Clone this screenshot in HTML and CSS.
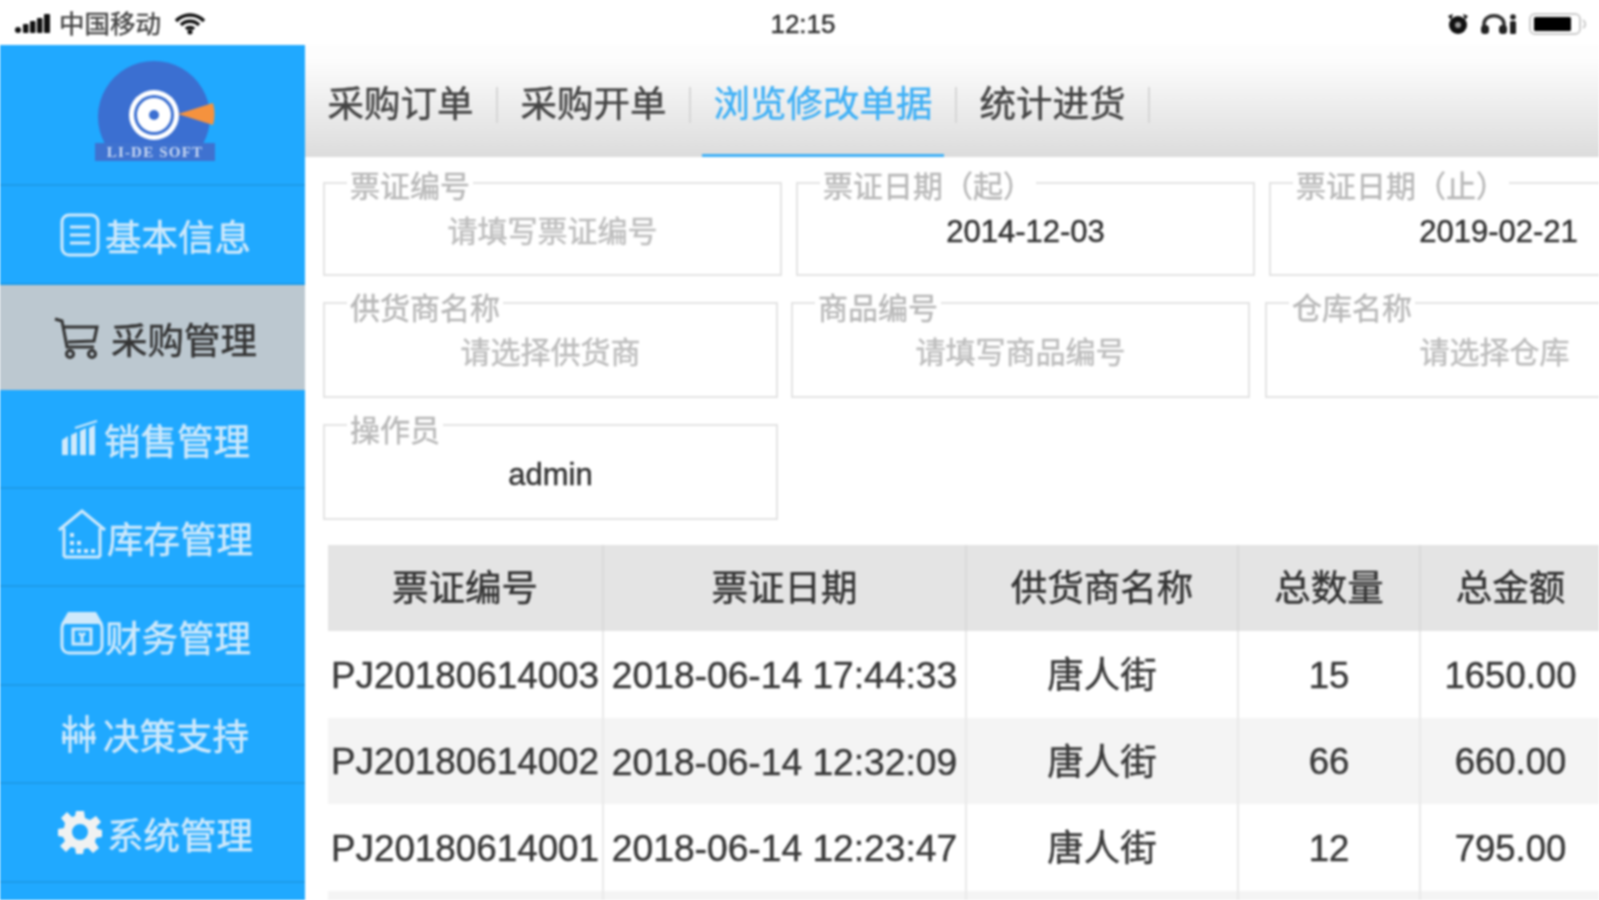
FILE: index.html
```html
<!DOCTYPE html>
<html lang="zh">
<head>
<meta charset="utf-8">
<title>浏览修改单据</title>
<link rel="stylesheet" href="styles.css">
</head>
<body>
<div class="app">
  <header class="status">
    <div class="status-left">
      <svg class="ic-signal" viewBox="0 0 36 20"><circle cx="3" cy="16" r="3"/><rect x="8" y="10" width="5.500" height="9" rx="1"/><rect x="15" y="7" width="5.500" height="12" rx="1"/><rect x="22" y="4" width="5.500" height="15" rx="1"/><rect x="29" y="0" width="6" height="19" rx="1"/></svg>
      <span class="carrier">中国移动</span>
      <svg class="ic-wifi" viewBox="0 0 32 22"><path d="M2 8 C10 0 22 0 30 8" /><path d="M7 12 C12 7 20 7 25 12"/><path d="M12 16 C14 14 18 14 20 16"/><circle cx="16" cy="19" r="2.500" class="fill"/></svg>
    </div>
    <div class="time">12:15</div>
    <div class="status-right">
      <svg class="ic-alarm" viewBox="0 0 22 22"><circle cx="11" cy="12" r="9"/><path d="M1 3 L6 1 L4 7Z M21 3 L16 1 L18 7Z"/><circle cx="11" cy="12" r="3" fill="#999"/></svg>
      <svg class="ic-head" viewBox="0 0 38 22"><path class="line" d="M4 16 V11 C4 0 24 0 24 11 V16"/><rect x="1" y="12" width="8" height="9" rx="3.500"/><rect x="19" y="12" width="8" height="9" rx="3.500"/><circle cx="33" cy="4" r="2.800"/><rect x="30" y="8" width="6" height="13" rx="1.500"/></svg>
      <svg class="ic-batt" viewBox="0 0 58 24"><rect class="shell" x="1" y="2" width="50" height="20" rx="5"/><rect x="5" y="5" width="37" height="14" rx="1.500"/><path class="shell" d="M54 8 C57 10 57 14 54 16"/></svg>
    </div>
  </header>

  <div class="body">
    <nav class="side">
      <div class="logo">
        <svg class="logo-mark" viewBox="0 0 124 106">
          <path d="M12 87 A56 56 0 1 1 110 87 Z" fill="#3b6fd1"/>
          <rect x="2" y="86" width="120" height="18" fill="#3f72d0"/>
          <circle cx="61" cy="58" r="25" fill="#fff"/>
          <circle cx="61" cy="58" r="20" fill="#3b6fd1"/>
          <circle cx="61" cy="58" r="17" fill="#fff"/>
          <circle cx="61" cy="58" r="5" fill="#3b6fd1"/>
          <path d="M85 57 L120 46 Q123 57 120 68 Z" fill="#f5923e"/>
          <text x="62" y="100" text-anchor="middle" class="logo-text">LI-DE SOFT</text>
        </svg>
      </div>
      <a class="item first">
        <svg class="ic ic-doc" viewBox="0 0 40 44"><rect x="2" y="2" width="36" height="40" rx="7"/><path d="M10 14H30M10 22H30M10 30H30"/></svg>
        <span>基本信息</span>
      </a>
      <a class="item active">
        <svg class="ic ic-cart" viewBox="0 0 46 44"><path d="M1 3 L8 5 L13 31 H40 M10 11 H43 L40 25 L14 26"/><circle cx="16" cy="38" r="3.500"/><circle cx="38" cy="38" r="3.500"/></svg>
        <span>采购管理</span>
      </a>
      <a class="item">
        <svg class="ic ic-bars" viewBox="0 0 38 36"><path class="fill" d="M1 20 L7 16 V35 H1Z M10 15 L16 12 V35 H10Z M19 11 L25 8 V35 H19Z M28 8 L34 5 V35 H28Z"/><path d="M14 8 L36 1"/></svg>
        <span>销售管理</span>
      </a>
      <a class="item store">
        <svg class="ic ic-house" viewBox="0 0 48 50"><path d="M1 21 L24 2 L47 21 M6 19 V48 M42 19 V48 M6 48 H42"/><path class="dots" d="M14 24V28 M14 32V36 M14 40V44 M21 32V36 M21 40V44 M28 40V44 M35 40V44"/></svg>
        <span>库存管理</span>
      </a>
      <a class="item store">
        <svg class="ic ic-shop" viewBox="0 0 44 44"><path class="fill" d="M8 1 H36 L43 13 H1Z"/><rect x="2" y="10" width="40" height="32" rx="7"/><rect x="13" y="18" width="18" height="15"/><path d="M19 22 L22 25 L25 22 M22 25 V31"/></svg>
        <span>财务管理</span>
      </a>
      <a class="item">
        <svg class="ic ic-tree" viewBox="0 0 36 40"><path d="M9 1 V39 M26 1 V39 M2 10 L9 15 L16 10 M19 10 L26 15 L33 10 M1 24 H16 M20 24 H35 M3 17 V30 M15 17 V30 M20 17 V30 M32 17 V30"/></svg>
        <span>决策支持</span>
      </a>
      <a class="item">
        <svg class="ic ic-gear" viewBox="0 0 44 44"><path class="gear" fill-rule="evenodd" d="M18 1 H26 L27 8 L32 10 L38 6 L43 12 L38 17 L40 19 L44 20 V27 L38 28 L37 32 L41 38 L35 43 L30 38 L26 39 L25 44 H18 L17 38 L13 37 L8 42 L2 36 L7 31 L5 27 L0 26 V19 L6 18 L7 13 L3 8 L9 2 L14 7 L17 6 Z M22 14 A8 8 0 1 0 22.010 30 A8 8 0 1 0 22 14 Z"/></svg>
        <span>系统管理</span>
      </a>
    </nav>

    <main class="main">
      <div class="tabs">
        <div class="tab"><span class="tab-label">采购订单</span></div>
        <div class="tab"><span class="tab-label">采购开单</span></div>
        <div class="tab on"><span class="tab-label">浏览修改单据</span></div>
        <div class="tab"><span class="tab-label">统计进货</span></div>
      </div>

      <section class="filters">
        <div class="row row-a">
          <fieldset class="field"><legend>票证编号</legend><div class="val ph">请填写票证编号</div></fieldset>
          <fieldset class="field"><legend>票证日期（起）</legend><div class="val">2014-12-03</div></fieldset>
          <fieldset class="field"><legend>票证日期（止）</legend><div class="val">2019-02-21</div></fieldset>
        </div>
        <div class="row row-b">
          <fieldset class="field"><legend>供货商名称</legend><div class="val ph">请选择供货商</div></fieldset>
          <fieldset class="field"><legend>商品编号</legend><div class="val ph">请填写商品编号</div></fieldset>
          <fieldset class="field"><legend>仓库名称</legend><div class="val ph">请选择仓库</div></fieldset>
        </div>
        <div class="row row-b">
          <fieldset class="field"><legend>操作员</legend><div class="val">admin</div></fieldset>
        </div>
      </section>

      <table class="grid">
        <colgroup><col class="c1"><col class="c2"><col class="c3"><col class="c4"><col class="c5"></colgroup>
        <thead>
          <tr><th>票证编号</th><th>票证日期</th><th>供货商名称</th><th>总数量</th><th>总金额</th></tr>
        </thead>
        <tbody>
          <tr><td>PJ20180614003</td><td>2018-06-14 17:44:33</td><td class="name">唐人街</td><td>15</td><td>1650.00</td></tr>
          <tr><td>PJ20180614002</td><td>2018-06-14 12:32:09</td><td class="name">唐人街</td><td>66</td><td>660.00</td></tr>
          <tr><td>PJ20180614001</td><td>2018-06-14 12:23:47</td><td class="name">唐人街</td><td>12</td><td>795.00</td></tr>
          <tr><td></td><td></td><td></td><td></td><td></td></tr>
        </tbody>
      </table>
    </main>
  </div>
</div>
</body>
</html>
```

FILE: styles.css
```css
* { box-sizing: border-box; }
html, body { margin: 0; padding: 0; background: #fff; }
body {
  width: 1599px;
  height: 900px;
  overflow: hidden;
  font-family: "Liberation Sans", "Noto Sans CJK SC", sans-serif;
  color: #333;
}
.app {
  width: 1599px;
  height: 900px;
  display: flex;
  flex-direction: column;
  overflow: hidden;
  filter: blur(0.9px);
  -webkit-text-stroke: 0.45px;
}

/* status bar */
.status {
  height: 45px;
  flex: none;
  display: grid;
  grid-template-columns: 1fr auto 1fr;
  align-items: center;
  padding: 3px 12px 0 15px;
  background: #fff;
  color: #111;
}
.status-left, .status-right { display: flex; align-items: center; }
.status-right { justify-content: flex-end; }
.carrier { font-size: 25.500px; color: #444; margin: 0 13px 0 8px; line-height: 30px; }
.time { font-size: 26px; color: #333; padding-left: 4px; }
.ic-signal { width: 36px; height: 20px; fill: #111; }
.ic-wifi { width: 32px; height: 22px; fill: none; stroke: #111; stroke-width: 3.500; }
.ic-wifi .fill { fill: #111; stroke: none; }
.ic-alarm { width: 22px; height: 22px; fill: #111; margin-right: 11px; }
.ic-head { width: 38px; height: 22px; fill: #222; margin-right: 11px; }
.ic-head .line { fill: none; stroke: #333; stroke-width: 3.500; }
.ic-batt { width: 58px; height: 24px; fill: #000; }
.ic-batt .shell { fill: none; stroke: #ccc; stroke-width: 2; }

/* layout */
.body { flex: 1; display: flex; min-height: 0; }

/* side nav */
.side {
  width: 305px;
  flex: none;
  display: flex;
  flex-direction: column;
  background: #20a9ff;
  color: #cfe9fb;
}
.logo {
  height: 141px;
  flex: none;
  display: flex;
  justify-content: center;
  padding-top: 12px;
  border-bottom: 2px solid #1c9be9;
}
.logo-mark { width: 124px; height: 106px; margin-left: 4px; }
.logo-text {
  font: bold 15px "Liberation Serif", serif;
  letter-spacing: 1.200px;
  fill: #c9d8f2;
  stroke: none;
  -webkit-text-stroke: 0;
}
.item {
  height: 98.500px;
  flex: none;
  display: flex;
  align-items: center;
  justify-content: center;
  gap: 5px;
  padding-left: 6px;
  font-size: 36.500px;
  border-bottom: 2px solid #1c9be9;
}
.item.first { height: 99px; }
.item.active { height: 105px; background: #bcc8d0; color: #333; gap: 11px; border-bottom: 0; }
.item.store { gap: 1px; }
.item span { padding-top: 2px; }
.ic { flex: none; fill: none; stroke: #cfe9fb; stroke-width: 3; }
.ic-doc { width: 40px; height: 44px; }
.ic-cart { width: 46px; height: 44px; stroke: #333; }
.ic-bars { width: 38px; height: 36px; stroke-width: 2; }
.ic-bars .fill { fill: #cfe9fb; stroke: none; }
.ic-house { width: 48px; height: 50px; margin-top: -6px; }
.ic-house .dots { stroke-width: 4; }
.ic-shop { width: 44px; height: 44px; margin-top: -4px; }
.ic-shop .fill { fill: #cfe9fb; stroke: none; }
.ic-tree { width: 38px; height: 40px; margin-left: -2px; }
.ic-gear { width: 44px; height: 44px; stroke: none; }
.ic-gear .gear { fill: #f0f2f2; }

/* main */
.main { flex: 1; min-width: 0; overflow: hidden; background: #fff; }
.tabs {
  height: 112px;
  display: flex;
  background: linear-gradient(#fdfdfd 12%, #dcdcdc 100%);
}
.tab {
  position: relative;
  display: flex;
  align-items: center;
  padding-top: 8px;
}
.tab-label {
  font-size: 36.500px;
  line-height: 36px;
  color: #444;
  padding: 0 22.500px;
  border-right: 2px solid #d6d6d6;
}
.tab.on .tab-label { color: #3fb0f6; }
.tab.on::after {
  content: "";
  position: absolute;
  left: 11px;
  right: 13px;
  bottom: 0;
  height: 3px;
  background: #3fb0f6;
}

.filters { padding: 5px 0 0 18px; display: flex; flex-direction: column; gap: 4px; }
.row { display: flex; gap: 14px; }
.field {
  flex: none;
  margin: 0;
  padding: 0;
  height: 114px;
  min-width: 0;
  border: 2px solid #e3e3e3;
}
.field legend {
  margin-left: 22px;
  padding: 8px 3px 0;
  font-size: 30px;
  line-height: 34px;
  color: #b8b8b8;
}
.row-a .field { width: 459px; }
.row-b { gap: 13px; }
.row-b .field { width: 455px; height: 118px; }
.row-b .field legend { padding-top: 12px; }
.row-b .field + .field { width: 459px; margin-right: 2px; }
.val {
  text-align: center;
  font-size: 31px;
  line-height: 55px;
  color: #333;
}
.row-b .val { line-height: 53px; }
.val.ph { font-size: 30px; color: #bdbdbd; }

/* table */
.grid {
  margin: 25px 0 0 23px;
  width: 1272px;
  table-layout: fixed;
  border-collapse: collapse;
  font-size: 36.500px;
  color: #3a3a3a;
}
.c1 { width: 275px; }
.c2 { width: 363px; }
.c3 { width: 272px; }
.c4 { width: 182px; }
.c5 { width: 180px; }
.grid th, .grid td {
  padding: 0;
  text-align: center;
  white-space: nowrap;
  overflow: visible;
  border-right: 2px solid #e9e9e9;
}
.grid td { padding-top: 3px; }
.grid td.name { padding: 0 0 3px; }
.grid td:nth-child(1) { font-size: 36.800px; }
.grid td:nth-child(2) { font-size: 37.200px; }
.grid th:last-child, .grid td:last-child { border-right: 0; }
.grid thead tr { height: 86px; background: #e4e4e4; }
.grid th { font-weight: 400; color: #333; border-right-color: #d9d9d9; padding-bottom: 6px; }
.grid tbody tr { height: 86.500px; }
.grid tbody tr:nth-child(even) { background: #f4f4f4; }
```
